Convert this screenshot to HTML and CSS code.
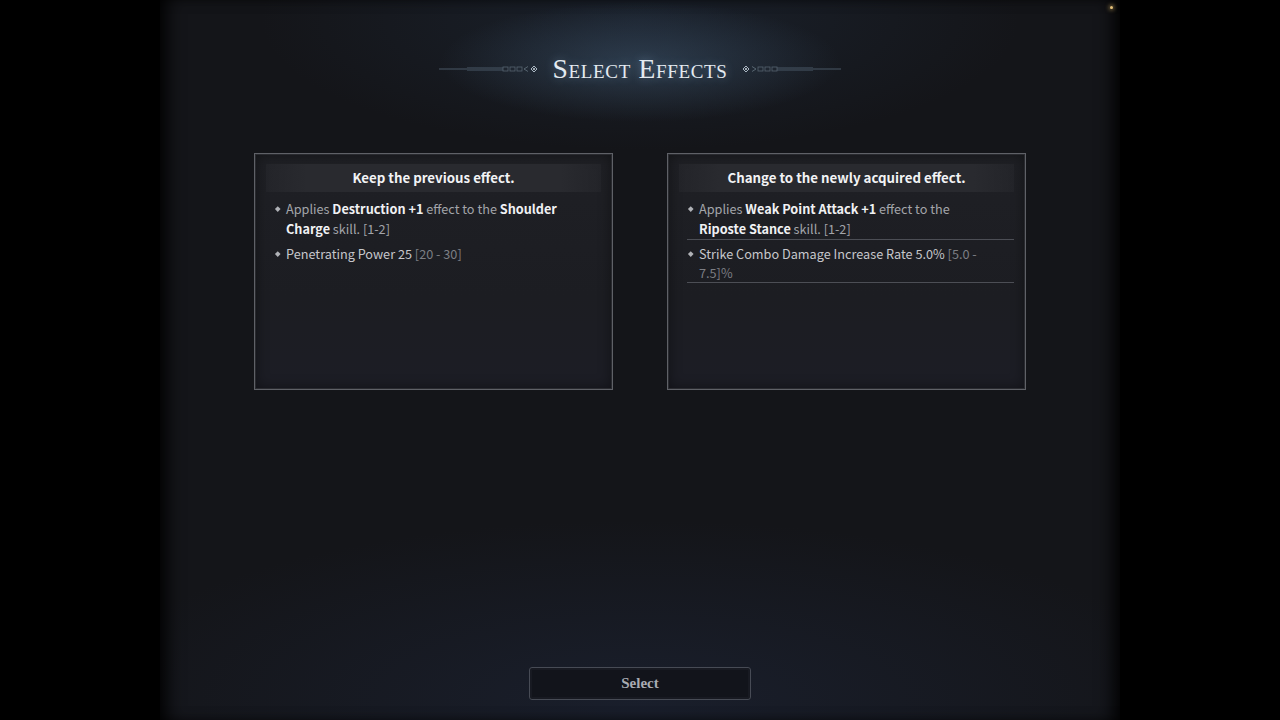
FILE: index.html
```html
<!DOCTYPE html>
<html lang="en">
<head>
    <meta charset="UTF-8">
    <meta name="viewport" content="width=device-width, initial-scale=1.0">
    <link rel="stylesheet" href="styles.css">
    <title>Select Effects</title>
</head>
<body>
    <div class="screen">
        <span class="spark"></span>

        <div class="title-row">
            <svg class="ornament" width="100" height="10" viewBox="0 0 100 10">
                <line x1="0" y1="5" x2="64" y2="5" stroke="#4b5866" stroke-width="1"/>
                <line x1="28" y1="3.5" x2="64" y2="3.5" stroke="#37434f" stroke-width="0.8"/>
                <line x1="28" y1="6.5" x2="64" y2="6.5" stroke="#37434f" stroke-width="0.8"/>
                <rect x="64" y="3" width="5" height="4" fill="none" stroke="#56636f" stroke-width="0.8"/>
                <rect x="71" y="3" width="5" height="4" fill="none" stroke="#56636f" stroke-width="0.8"/>
                <rect x="78" y="3" width="5" height="4" fill="none" stroke="#56636f" stroke-width="0.8"/>
                <path d="M85 5 L89 2.5 M85 5 L89 7.5" stroke="#65737f" stroke-width="0.8"/>
                <path d="M95 2 L98 5 L95 8 L92 5 Z" fill="none" stroke="#a9b6c2" stroke-width="1"/>
                <circle cx="95" cy="5" r="1" fill="#cdd6de"/>
            </svg>
            <h1>Select Effects</h1>
            <svg class="ornament flip" width="100" height="10" viewBox="0 0 100 10">
                <line x1="0" y1="5" x2="64" y2="5" stroke="#4b5866" stroke-width="1"/>
                <line x1="28" y1="3.5" x2="64" y2="3.5" stroke="#37434f" stroke-width="0.8"/>
                <line x1="28" y1="6.5" x2="64" y2="6.5" stroke="#37434f" stroke-width="0.8"/>
                <rect x="64" y="3" width="5" height="4" fill="none" stroke="#56636f" stroke-width="0.8"/>
                <rect x="71" y="3" width="5" height="4" fill="none" stroke="#56636f" stroke-width="0.8"/>
                <rect x="78" y="3" width="5" height="4" fill="none" stroke="#56636f" stroke-width="0.8"/>
                <path d="M85 5 L89 2.5 M85 5 L89 7.5" stroke="#65737f" stroke-width="0.8"/>
                <path d="M95 2 L98 5 L95 8 L92 5 Z" fill="none" stroke="#a9b6c2" stroke-width="1"/>
                <circle cx="95" cy="5" r="1" fill="#cdd6de"/>
            </svg>
        </div>

        <div class="cards">
            <div class="card">
                <div class="card-head">Keep the previous effect.</div>
                <ul class="effects">
                    <li>Applies <b>Destruction +1</b> effect to the <b>Shoulder Charge</b> skill. [1-2]</li>
                    <li><span class="stat">Penetrating Power 25</span> <span class="range">[20 - 30]</span></li>
                </ul>
            </div>
            <div class="card">
                <div class="card-head">Change to the newly acquired effect.</div>
                <ul class="effects lined">
                    <li>Applies <b>Weak Point Attack +1</b> effect to the <b>Riposte Stance</b> skill. [1-2]</li>
                    <li><span class="stat">Strike Combo Damage Increase Rate 5.0%</span> <span class="range">[5.0 - 7.5]%</span></li>
                </ul>
            </div>
        </div>

        <div class="actions">
            <button class="select-btn">Select</button>
        </div>
    </div>
</body>
</html>
```

FILE: styles.css
```css
body {
    margin: 0;
    background-color: #000000;
    font-family: "Noto Sans CJK SC", "Noto Sans", sans-serif;
}

.screen {
    position: relative;
    width: 960px;
    height: 720px;
    margin: 0 auto;
    display: flex;
    flex-direction: column;
    align-items: center;
    background:
        radial-gradient(ellipse 200px 60px at 50% 62px, rgba(75, 105, 135, 0.4), rgba(75, 105, 135, 0) 100%),
        radial-gradient(ellipse 380px 130px at 50% 20px, rgba(40, 60, 85, 0.3), rgba(40, 60, 85, 0) 100%),
        radial-gradient(ellipse 560px 180px at 50% 700px, rgba(32, 42, 66, 0.45), rgba(32, 42, 66, 0) 100%),
        #141519;
    box-shadow: inset 14px 0 18px -8px #000, inset -14px 0 18px -8px #000;
}

.spark {
    position: absolute;
    top: 6px;
    right: 7px;
    width: 3px;
    height: 3px;
    border-radius: 50%;
    background-color: #e6c27a;
    box-shadow: 0 0 4px 1px rgba(230, 190, 110, 0.6);
}

.title-row {
    display: flex;
    align-items: center;
    gap: 14px;
    margin-top: 52px;
    height: 34px;
}

.ornament.flip {
    transform: scaleX(-1);
}

h1 {
    margin: 0;
    font-family: "Liberation Serif", serif;
    font-weight: normal;
    font-variant: small-caps;
    font-size: 27.6px;
    letter-spacing: 0.65px;
    color: #e4eaf0;
    text-shadow: 0 0 10px rgba(150, 190, 230, 0.45);
}

.cards {
    display: flex;
    gap: 54px;
    margin-top: 67px;
}

.card {
    width: 335px;
    height: 225px;
    border: 1px solid #5f6167;
    background: linear-gradient(180deg, #1f2025 0%, #1c1d22 60%, #1c1d25 100%);
    box-shadow: inset 0 0 0 1px #292a2f, inset 0 0 14px rgba(0, 0, 0, 0.45);
    padding: 10px 11px 0 11px;
}

.card-head {
    height: 28px;
    line-height: 28px;
    text-align: center;
    font-size: 13.3px;
    font-weight: bold;
    color: #f2f3f5;
    background: linear-gradient(90deg, rgba(42, 43, 48, 0.4), #292a2f 12%, #292a2f 88%, rgba(42, 43, 48, 0.4));
}

.effects {
    list-style: none;
    margin: 7px 0 0 0;
    padding: 0 0 0 8px;
}

.effects li {
    position: relative;
    padding: 0 27px 0 12px;
    font-size: 12.7px;
    line-height: 20px;
    color: #a3a5aa;
    margin-bottom: 5px;
}

.effects li::before {
    content: "";
    position: absolute;
    left: 2px;
    top: 8px;
    width: 3.5px;
    height: 3.5px;
    background-color: #b0b2b7;
    transform: rotate(45deg);
}

.effects b {
    color: #f0f1f3;
    font-weight: bold;
}

.stat {
    color: #c6c7cb;
}

.range {
    color: #7c7e84;
}

.lined li {
    margin-bottom: 4px;
    border-bottom: 1px solid #4c4e55;
}

.lined li:last-child {
    line-height: 19px;
}

.actions {
    margin-top: auto;
    margin-bottom: 20px;
}

.select-btn {
    width: 222px;
    height: 33px;
    border: 1px solid #474b55;
    border-radius: 3px;
    background-color: #12141b;
    box-shadow: inset 0 0 0 2px #181a22;
    color: #a8abb2;
    font-family: "Liberation Serif", serif;
    font-size: 15px;
    font-weight: bold;
    cursor: pointer;
}
```
